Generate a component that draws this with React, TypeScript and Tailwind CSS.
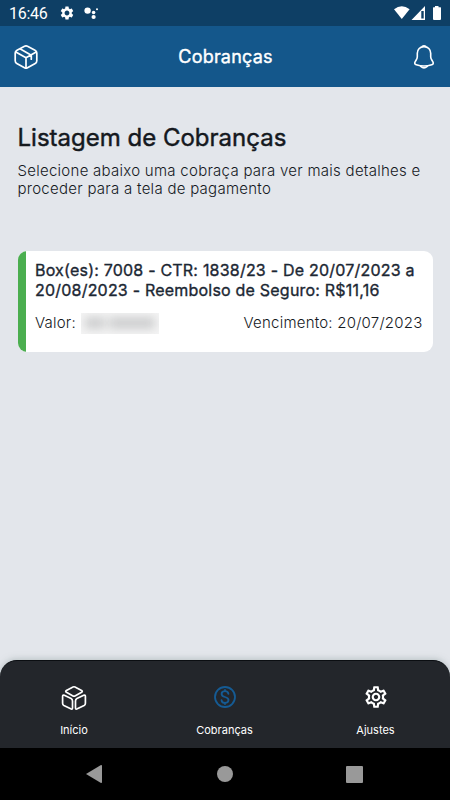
import React from "react";
import { MdSettings, MdOutlineSettings } from "react-icons/md";

function BoxIcon() {
  return (
    <svg width="24" height="24" viewBox="0 0 24 24" fill="none" stroke="white" strokeWidth="1.7" strokeLinecap="round" strokeLinejoin="round">
      <path d="M10.5 1.2Q12 .5 13.5 1.2L21 5.2Q22.8 6.2 22.8 8V15.7Q22.8 17.5 21.2 18.4L13.5 22.7Q12 23.5 10.5 22.7L2.8 18.4Q1.2 17.5 1.2 15.7V8Q1.2 6.2 3 5.2Z" />
      <path d="M1.8 7L12 12.8L22.2 7M12 12.8V22.9M6.4 4L17.3 10.2V14.2" />
    </svg>
  );
}

function BellIcon() {
  return (
    <svg width="22" height="26" viewBox="0 0 22 26" fill="none" stroke="white" strokeWidth="1.6" strokeLinecap="round" strokeLinejoin="round">
      <path d="M11 2.6C7 2.6 4.3 5.5 4.3 9.3V12.7C4.3 14 3.9 14.9 3.2 16L2.1 17.8C1.3 19.2 1.8 20.3 3.3 20.8C8.4 22.4 13.6 22.4 18.7 20.8C20.2 20.3 20.7 19.2 19.9 17.8L18.8 16C18.1 14.9 17.7 14 17.7 12.7V9.3C17.7 5.5 15 2.6 11 2.6Z" />
      <path d="M9.5 2.2Q11 1.3 12.5 2.2M7.8 22.4Q11 25.4 14.2 22.4" />
    </svg>
  );
}

function CubesIcon() {
  return (
    <svg width="26" height="26" viewBox="0 0 26 26" fill="none" stroke="white" strokeWidth="1.7" strokeLinejoin="round">
      <path d="M12 2Q13 1.5 14 2L20.6 5.5Q22 6.4 20.6 7.3L14 10.9Q13 11.4 12 10.9L5.4 7.3Q4 6.4 5.4 5.5Z" />
      <path d="M3.3 10.2Q1.6 9.6 1.6 11.4V18.2Q1.6 19.8 2.9 20.5L9.7 23.8Q11.5 24.6 11.5 22.7V16Q11.5 14.3 10.1 13.6Z" />
      <path d="M22.7 10.2Q24.4 9.6 24.4 11.4V18.2Q24.4 19.8 23.1 20.5L16.3 23.8Q14.5 24.6 14.5 22.7V16Q14.5 14.3 15.9 13.6Z" />
    </svg>
  );
}

function CoinIcon() {
  return (
    <svg width="24" height="24" viewBox="0 0 24 24" fill="none" stroke="#155b94" strokeWidth="1.8" strokeLinecap="round">
      <circle cx="12" cy="12" r="10" />
      <path d="M15.4 8.8C15.2 7 13.9 6.1 12 6.1C9.9 6.1 8.6 7.2 8.6 8.9C8.6 10.7 9.7 11.4 12 12C14.4 12.6 15.5 13.3 15.5 15.1C15.5 16.9 14.1 17.9 12 17.9C10 17.9 8.6 16.9 8.5 15.1M12 5V6.1M12 17.9V19" />
    </svg>
  );
}

export default function App() {
  return (
    <div className="flex h-[800px] w-[450px] flex-col overflow-hidden bg-[#e3e6eb] font-['Inter',sans-serif] text-[#15191e]">
      <div className="flex h-[26px] shrink-0 items-center bg-[#0e3f65] pl-[9px] pr-[8px] text-white">
        <span className="w-[50px] pt-[2px] font-['Roboto',sans-serif] text-[16px] leading-[26px] tracking-[-0.3px]">16:46</span>
        <MdSettings className="size-[16px]" />
        <svg className="ml-[8px]" width="17" height="16" viewBox="0 0 17 16" fill="white">
          <circle cx="4.6" cy="5.6" r="3.2" /><circle cx="10.6" cy="7.5" r="1.8" /><circle cx="10.6" cy="12" r="2.1" /><circle cx="14" cy="4.3" r="1" />
        </svg>
        <svg className="ml-auto" width="50" height="16" viewBox="0 0 50 16" fill="white">
          <path d="M2 4.2Q9.8-1.6 17.6 4.2L9.8 14Z" />
          <path fillRule="evenodd" d="M33 1V15H19.5ZM29.3 6V13.6H31.7V6Z" />
          <path d="M43 1H46.5V2.3H48.5Q49 2.3 49 3V14Q49 15 48 15H42Q41 15 41 14V3Q41 2.3 41.5 2.3H43Z" />
        </svg>
      </div>

      <header className="flex h-[61px] shrink-0 items-center justify-between bg-[#14578b] px-[14px] pr-[15px]">
        <BoxIcon />
        <h1 className="text-[18px] leading-6 tracking-[0.2px] text-white [-webkit-text-stroke:0.4px]">Cobranças</h1>
        <BellIcon />
      </header>

      <main className="flex-1 px-[17.5px] pt-[37px]">
        <h2 className="whitespace-nowrap text-[24px] leading-[28px] [-webkit-text-stroke:0.45px]">Listagem de Cobranças</h2>
        <p className="mt-[10.4px] whitespace-nowrap text-[15px] font-light leading-[18px] tracking-[0.27px]">
          Selecione abaixo uma cobraça para ver mais detalhes e<br />proceder para a tela de pagamento
        </p>
        <section className="mt-[53px] flex h-[100.5px] overflow-hidden rounded-[9px] bg-white">
          <div className="w-[8.5px] shrink-0 bg-[#4bae4f]" />
          <div className="flex-1 pl-[9px] pr-[10px] pt-[10px]">
            <h3 className="whitespace-nowrap text-[16px] leading-[19.5px] tracking-[0.21px] text-[#1c2733] [-webkit-text-stroke:0.35px]">
              Box(es): 7008 - CTR: 1838/23 - De 20/07/2023 a<br />20/08/2023 - Reembolso de Seguro: R$11,16
            </h3>
            <div className="mt-[13px] flex h-[20px] items-center whitespace-nowrap text-[15px] font-light tracking-[0.22px]">
              <span>Valor:</span>
              <span className="ml-[5px] flex h-[21px] w-[78px] items-center justify-center overflow-hidden bg-[#f5f5f5]">
                <span className="flex gap-[4px] blur-[5px]">
                  <span className="h-[12px] w-[20px] bg-[#cdcecf]" />
                  <span className="h-[12px] w-[46px] bg-[#cdcecf]" />
                </span>
              </span>
              <span className="ml-auto">Vencimento: 20/07/2023</span>
            </div>
          </div>
        </section>
      </main>

      <nav className="grid h-[88px] shrink-0 grid-cols-[148px_153px_149px] rounded-t-[17px] border-t border-[#0b0e12] bg-[#23262b] text-[11px] text-white shadow-[0_-1px_6px_#8c9c9c80]">
        <div className="flex flex-col items-center pt-[24px]">
          <CubesIcon /><span className="mt-[11px] leading-[17px]">Início</span>
        </div>
        <div className="flex flex-col items-center pt-[23px]">
          <span className="flex h-[26px] items-center"><CoinIcon /></span><span className="mt-[12px] leading-[17px]">Cobranças</span>
        </div>
        <div className="flex flex-col items-center pt-[23px]">
          <MdOutlineSettings className="size-[26px]" /><span className="mt-[12px] leading-[17px]">Ajustes</span>
        </div>
      </nav>

      <div className="flex h-[52px] shrink-0 items-center justify-between bg-black pl-[85px] pr-[87px]">
        <svg width="18" height="20" viewBox="0 0 18 20" fill="#999"><path d="M1 10L16 1Q17 .7 17 2V18Q17 19.3 16 19Z" /></svg>
        <span className="size-[16px] rounded-full bg-[#999]" />
        <span className="size-[17px] rounded-[1px] bg-[#999]" />
      </div>
    </div>
  );
}
